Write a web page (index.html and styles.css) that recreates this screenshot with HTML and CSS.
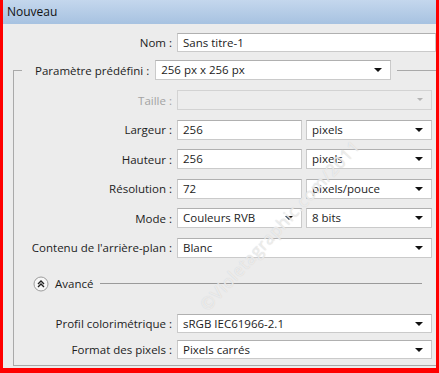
FILE: index.html
```html
<!DOCTYPE html>
<html lang="fr">
<head>
    <meta charset="UTF-8">
    <meta name="viewport" content="width=device-width, initial-scale=1.0">
    <title>Nouveau</title>
    <link rel="stylesheet" href="styles.css">
</head>
<body>

    <div class="dialog">
        <div class="titlebar">Nouveau</div>

        <div class="content">
            <div class="row name-row">
                <label class="lbl">Nom :</label>
                <div class="field grow">Sans titre-1</div>
            </div>

            <fieldset class="group">
                <legend class="preset">
                    <label>Paramètre prédéfini :</label>
                    <div class="field select preset-select">256 px x 256 px<span class="arrow"></span></div>
                </legend>

                <div class="rows">
                    <div class="row disabled">
                        <label class="lbl">Taille :</label>
                        <div class="field select grow"><span class="arrow"></span></div>
                    </div>
                    <div class="row">
                        <label class="lbl">Largeur :</label>
                        <div class="field half">256</div>
                        <div class="field select grow">pixels<span class="arrow"></span></div>
                    </div>
                    <div class="row">
                        <label class="lbl">Hauteur :</label>
                        <div class="field half">256</div>
                        <div class="field select grow">pixels<span class="arrow"></span></div>
                    </div>
                    <div class="row">
                        <label class="lbl">Résolution :</label>
                        <div class="field half">72</div>
                        <div class="field select grow">pixels/pouce<span class="arrow"></span></div>
                    </div>
                    <div class="row">
                        <label class="lbl">Mode :</label>
                        <div class="field select half">Couleurs RVB<span class="arrow"></span></div>
                        <div class="field select grow">8 bits<span class="arrow"></span></div>
                    </div>
                    <div class="row">
                        <label class="lbl">Contenu de l'arrière-plan :</label>
                        <div class="field select grow">Blanc<span class="arrow"></span></div>
                    </div>
                </div>

                <div class="advanced">
                    <svg class="toggle" width="16" height="16" viewBox="0 0 16 16">
                        <circle cx="8" cy="8" r="7" fill="#f7f7f7" stroke="#9c9c9c"/>
                        <path d="M5 8 L8 5 L11 8 M5 11 L8 8 L11 11" fill="none" stroke="#222" stroke-width="1.4"/>
                    </svg>
                    <span>Avancé</span>
                    <div class="rule"></div>
                </div>

                <div class="rows adv-rows">
                    <div class="row">
                        <label class="lbl">Profil colorimétrique :</label>
                        <div class="field select grow">sRGB IEC61966-2.1<span class="arrow"></span></div>
                    </div>
                    <div class="row">
                        <label class="lbl">Format des pixels :</label>
                        <div class="field select grow">Pixels carrés<span class="arrow"></span></div>
                    </div>
                </div>
            </fieldset>
        </div>

        <div class="watermark">©Violetagraphic.com/2011</div>
    </div>

</body>
</html>
```

FILE: styles.css
```css
body {
    margin: 0;
    font-family: "Open Sans", "Noto Sans", sans-serif;
    font-size: 11.5px;
    color: #1c1c1c;
}

.dialog {
    position: relative;
    width: 439px;
    height: 373px;
    box-sizing: border-box;
    border: 3px solid #ff0000;
    border-top: 0;
    border-bottom-width: 5px;
    background-color: #ececec;
    overflow: hidden;
}

.titlebar {
    height: 24px;
    line-height: 24px;
    padding-left: 4px;
    font-size: 12px;
    color: #111;
    background: linear-gradient(#c4d7ed, #a7c2e1);
}

.content {
    padding-top: 9px;
}

.row {
    display: flex;
    align-items: center;
    gap: 4px;
    height: 20px;
}

.lbl {
    flex: none;
    width: 158px;
    padding-right: 1px;
    text-align: right;
}

.name-row {
    height: 19px;
}

.name-row .lbl {
    width: 169px;
}

.field {
    box-sizing: border-box;
    position: relative;
    height: 100%;
    padding-left: 5px;
    line-height: 17px;
    background-color: #fff;
    border: 1px solid #cacaca;
    border-top-color: #b0b0b0;
    white-space: nowrap;
}

.grow {
    flex: 1;
}

.half {
    flex: none;
    width: 125px;
}

.arrow {
    position: absolute;
    right: 8px;
    top: 7px;
    border-left: 4px solid transparent;
    border-right: 4px solid transparent;
    border-top: 4px solid #111;
}

.group {
    margin: 8px 0 0 10px;
    padding: 0 4px 6px 0;
    border: 1px solid #a9a9a9;
    border-right: 0;
    min-width: 0;
}

.preset {
    display: flex;
    align-items: center;
    gap: 6px;
    height: 20px;
    margin-left: 8px;
    padding: 0 6px 0 13px;
}

.preset-select {
    width: 236px;
}

.rows {
    display: flex;
    flex-direction: column;
    gap: 9.5px;
    margin-top: 10px;
}

.disabled .lbl {
    color: #a3a3a3;
}

.disabled .field {
    background-color: #ededed;
    border-color: #d3d3d3;
}

.disabled .arrow {
    border-top-color: #b4b4b4;
    border-left-width: 3px;
    border-right-width: 3px;
    border-top-width: 3px;
}

.advanced {
    display: flex;
    align-items: center;
    gap: 6px;
    height: 16px;
    margin: 18px 10px 0 19px;
}

.rule {
    flex: 1;
    height: 1px;
    margin-left: 1px;
    background-color: #9a9a9a;
}

.adv-rows {
    gap: 7px;
    margin-top: 22px;
}

.adv-rows .row {
    height: 19px;
}

.watermark {
    position: absolute;
    left: 200px;
    top: 296px;
    transform: rotate(-47deg);
    transform-origin: left center;
    font-size: 17px;
    letter-spacing: 0.6px;
    color: rgba(255, 255, 255, 0.6);
    text-shadow: 0 0 1px #c8c8c8;
    white-space: nowrap;
    pointer-events: none;
}
```
